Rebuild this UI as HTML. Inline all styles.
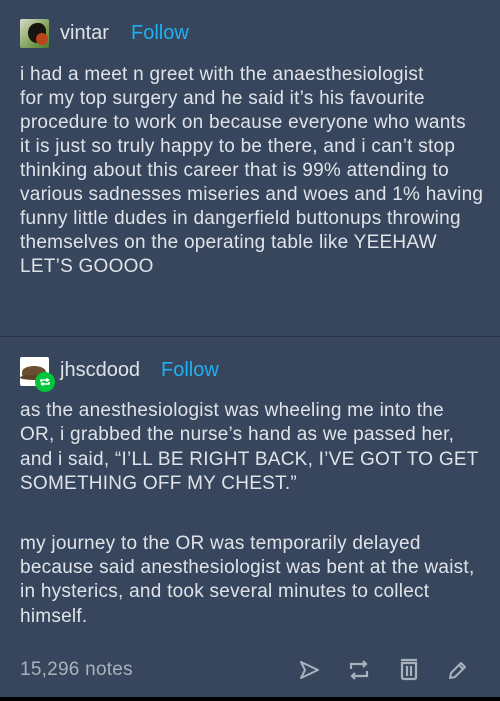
<!DOCTYPE html>
<html><head><meta charset="utf-8"><style>
body{margin:0;width:500px;height:701px;background:#37465c;font-family:"Liberation Sans",sans-serif;position:relative;overflow:hidden;color:#dfe3e9}
.l{position:absolute;left:20px;font-size:19px;letter-spacing:0.25px;line-height:24px;white-space:nowrap}
.n{position:absolute;font-size:20px;line-height:24px}
.f{color:#1eb0f0}
.div{position:absolute;left:0;right:0;top:336px;height:1px;background:#26313f}
.bot{position:absolute;left:0;right:0;top:697px;height:4px;background:#000}
svg{position:absolute}
</style></head><body>
<div style="position:absolute;left:20px;top:19px;width:29px;height:29px;background:linear-gradient(135deg,#d9ddc8,#7fa05a 60%,#4c7a2c);border-radius:2px;overflow:hidden"><div style="position:absolute;left:8px;top:4px;width:18px;height:20px;background:#1a1410;border-radius:50% 40% 30% 50%"></div><div style="position:absolute;left:16px;top:14px;width:12px;height:12px;background:#b8451c;border-radius:50%"></div></div>
<div class="n" style="left:60px;top:21px">vintar</div>
<div class="n f" style="left:131px;top:21px">Follow</div>
<div class="l" style="top:63px">i had a meet n greet with the anaesthesiologist</div>
<div class="l" style="top:87px">for my top surgery and he said it’s his favourite</div>
<div class="l" style="top:111px">procedure to work on because everyone who wants</div>
<div class="l" style="top:135px">it is just so truly happy to be there, and i can’t stop</div>
<div class="l" style="top:159px">thinking about this career that is 99% attending to</div>
<div class="l" style="top:183px">various sadnesses miseries and woes and 1% having</div>
<div class="l" style="top:207px">funny little dudes in dangerfield buttonups throwing</div>
<div class="l" style="top:231px">themselves on the operating table like YEEHAW</div>
<div class="l" style="top:255px">LET’S GOOOO</div>
<div class="div"></div>
<div style="position:absolute;left:20px;top:357px;width:29px;height:29px;background:#fff;border-radius:2px;overflow:hidden"><div style="position:absolute;left:2px;top:9px;width:24px;height:12px;background:#6a5030;border-radius:50% 50% 30% 30%"></div><div style="position:absolute;left:0;top:18px;width:29px;height:5px;background:#5a4128;border-radius:50%"></div></div>
<div style="position:absolute;left:35px;top:372px;width:20px;height:20px;border-radius:50%;background:#00c63b"></div>
<svg style="left:39px;top:376px" width="12" height="12" viewBox="0 0 12 12" fill="none" stroke="#fff" stroke-width="1.6"><path d="M2 6V4h7M7.5 2.5L9.5 4 7.5 5.5M10 6v2H3M4.5 9.5L2.5 8 4.5 6.5"/></svg>
<div class="n" style="left:60px;top:358px">jhscdood</div>
<div class="n f" style="left:161px;top:358px">Follow</div>
<div class="l" style="top:399px">as the anesthesiologist was wheeling me into the</div>
<div class="l" style="top:423px">OR, i grabbed the nurse’s hand as we passed her,</div>
<div class="l" style="top:448px">and i said, “I’LL BE RIGHT BACK, I’VE GOT TO GET</div>
<div class="l" style="top:472px">SOMETHING OFF MY CHEST.”</div>
<div class="l" style="top:532px">my journey to the OR was temporarily delayed</div>
<div class="l" style="top:556px">because said anesthesiologist was bent at the waist,</div>
<div class="l" style="top:580px">in hysterics, and took several minutes to collect</div>
<div class="l" style="top:605px">himself.</div>
<div class="l" style="top:658px;color:#a9b1bc">15,296 notes</div>
<svg style="left:298px;top:658px" width="24" height="24" viewBox="0 0 24 24" fill="none" stroke="#a9b1bc" stroke-width="2" stroke-linejoin="round"><path d="M3 4l17 8-17 8 4-8z"/></svg>
<svg style="left:347px;top:658px" width="24" height="24" viewBox="0 0 24 24" fill="none" stroke="#a9b1bc" stroke-width="2.2"><path d="M4 11V6h15M16 3l3 3-3 3M20 13v5H5M8 21l-3-3 3-3"/></svg>
<svg style="left:398px;top:658px" width="22" height="24" viewBox="0 0 22 24" fill="none" stroke="#a9b1bc" stroke-width="2.2"><path d="M3 2h16M4 5h14v14q0 2-2 2H6q-2 0-2-2zM9 8v10M13 8v10"/></svg>
<svg style="left:446px;top:658px" width="22" height="24" viewBox="0 0 22 24" fill="none" stroke="#a9b1bc" stroke-width="2" stroke-linejoin="round"><path d="M4 20l1-5L15 5l4 4L9 19zM13 7l4 4"/></svg>
<div class="bot"></div>
</body></html>
